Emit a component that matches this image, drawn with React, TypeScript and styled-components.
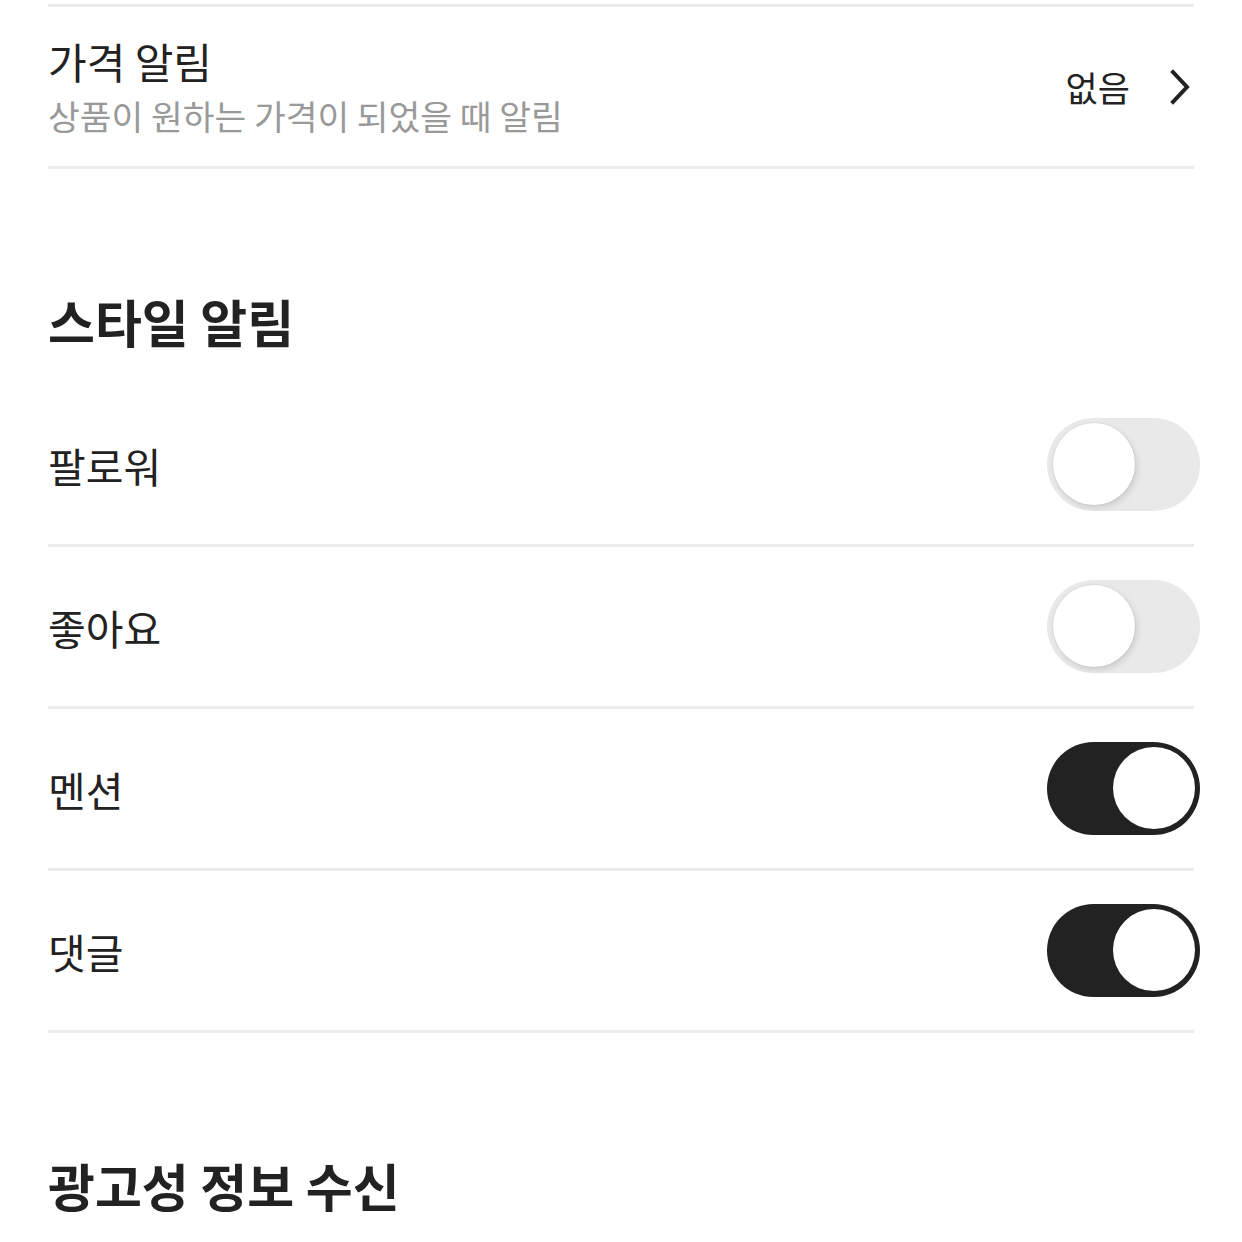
import styled, { createGlobalStyle } from "styled-components";

const GlobalStyle = createGlobalStyle`
  body {
    margin: 0;
    background: #fff;
    font-family: "Noto Sans CJK KR", "Noto Sans", sans-serif;
    color: #222;
  }
`;

const styleItems = [
  { label: "팔로워", on: false },
  { label: "좋아요", on: false },
  { label: "멘션", on: true },
  { label: "댓글", on: true },
];

export default function App() {
  return (
    <Page>
      <GlobalStyle />
      <LinkRow>
        <TextBlock>
          <RowTitle $size={42}>가격 알림</RowTitle>
          <RowDesc>상품이 원하는 가격이 되었을 때 알림</RowDesc>
        </TextBlock>
        <RowValue>
          없음
          <svg width="24" height="36" viewBox="0 0 24 36" fill="none">
            <path d="M5 3 L19 18 L5 33" stroke="#222" strokeWidth="4" strokeLinecap="square" />
          </svg>
        </RowValue>
      </LinkRow>

      <SectionTitle>스타일 알림</SectionTitle>
      {styleItems.map((item) => (
        <ToggleRow key={item.label}>
          <RowTitle $size={41}>{item.label}</RowTitle>
          <Toggle $on={item.on} role="switch" aria-checked={item.on}>
            <Knob $on={item.on} />
          </Toggle>
        </ToggleRow>
      ))}

      <SectionTitle>광고성 정보 수신</SectionTitle>
    </Page>
  );
}

const Page = styled.div`
  padding: 4px 48px 0 48px;
  width: 1146px;
`;

const LinkRow = styled.div`
  display: flex;
  align-items: center;
  justify-content: space-between;
  height: 159px;
  border-top: 3px solid #ebebeb;
  border-bottom: 3px solid #ebebeb;
`;

const TextBlock = styled.div`
  display: flex;
  flex-direction: column;
  gap: 8px;
  margin-top: -2px;
`;

const RowTitle = styled.div<{ $size: number }>`
  font-size: ${(p) => p.$size}px;
  line-height: 50px;
  color: #222;
`;

const RowDesc = styled.div`
  font-size: 34.5px;
  line-height: 42px;
  color: #999;
`;

const RowValue = styled.div`
  display: flex;
  align-items: center;
  gap: 38px;
  font-size: 35px;
  color: #222;
  margin-right: 2px;
`;

const SectionTitle = styled.h2`
  margin: 0;
  padding-top: 112px;
  height: 104px;
  font-size: 51px;
  font-weight: 700;
  line-height: 80px;
  color: #222;
`;

const ToggleRow = styled.div`
  display: flex;
  align-items: center;
  justify-content: space-between;
  height: 159px;
  border-bottom: 3px solid #ebebeb;
`;

const Toggle = styled.div<{ $on: boolean }>`
  position: relative;
  width: 153px;
  height: 93px;
  border-radius: 47px;
  margin-right: -6px;
  background: ${(p) => (p.$on ? "#222" : "#e9e9ea")};
  flex-shrink: 0;
`;

const Knob = styled.div<{ $on: boolean }>`
  position: absolute;
  top: 5px;
  left: ${(p) => (p.$on ? "66px" : "6px")};
  width: 82px;
  height: 82px;
  border-radius: 50%;
  background: #fff;
  box-shadow: ${(p) => (p.$on ? "none" : "2px 3px 6px rgba(0,0,0,0.12), 0 0 0 1px rgba(0,0,0,0.04)")};
`;
